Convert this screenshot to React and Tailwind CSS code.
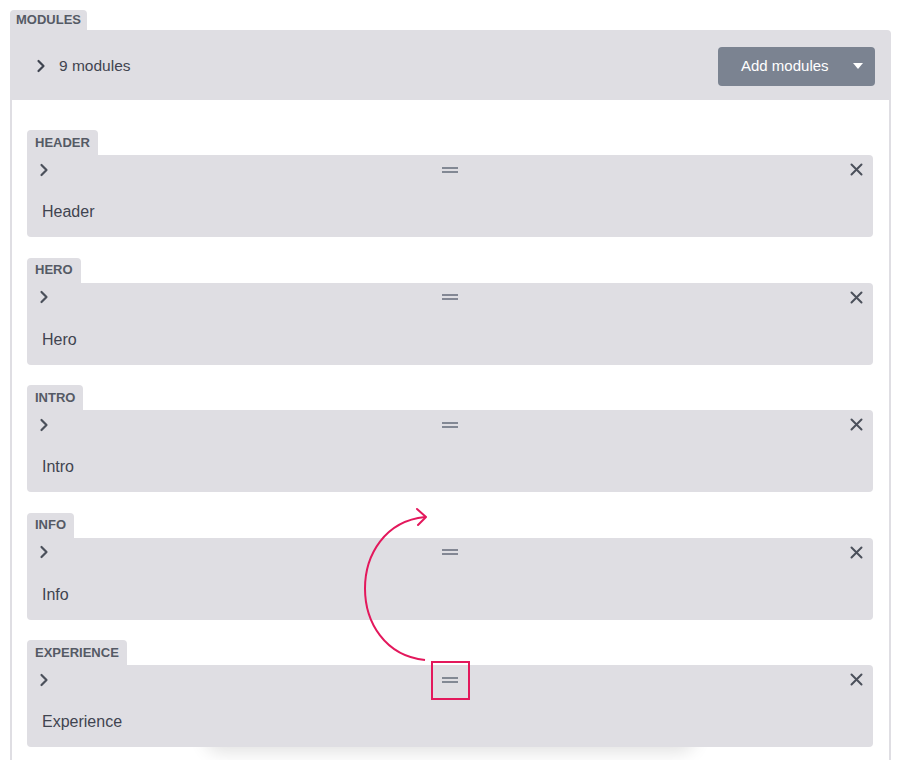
import React from "react";

const modules = ["Header", "Hero", "Intro", "Info", "Experience"];

const Chevron = ({ className = "" }) => (
  <svg width="10" height="14" viewBox="0 0 10 14" className={className}>
    <path d="M2.5 2 L7.5 7 L2.5 12" fill="none" stroke="currentColor" strokeWidth="2.2" strokeLinecap="round" strokeLinejoin="round" />
  </svg>
);

const DragHandle = () => (
  <svg width="16" height="6" viewBox="0 0 16 6">
    <line x1="0" y1="1" x2="16" y2="1" stroke="#6b7280" strokeWidth="1.6" />
    <line x1="0" y1="5" x2="16" y2="5" stroke="#6b7280" strokeWidth="1.6" />
  </svg>
);

const Close = () => (
  <svg width="13" height="13" viewBox="0 0 13 13">
    <path d="M1.5 1.5 L11.5 11.5 M11.5 1.5 L1.5 11.5" stroke="#4b505b" strokeWidth="2" strokeLinecap="round" />
  </svg>
);

const ModuleItem = ({ name }) => (
  <div>
    <div className="flex h-[25px] w-fit items-center rounded-t-[4px] bg-[#dfdee3] px-2 text-[13px] font-bold uppercase text-[#555a65]">
      {name}
    </div>
    <div className="h-[82px] rounded-b-[4px] rounded-tr-[4px] bg-[#dfdee3]">
      <div className="flex h-[28px] items-center justify-between pl-[12px] pr-[10px] pt-[1px]">
        <Chevron className="text-[#4b505b]" />
        <DragHandle />
        <Close />
      </div>
      <div className="pl-[15px] pt-[17px] text-[16px] text-[#3f4450]">{name}</div>
    </div>
  </div>
);

export default function App() {
  return (
    <div className="relative min-h-[760px] overflow-hidden bg-white pl-[10px] pt-[10px] font-['Liberation_Sans',Arial,sans-serif]">
      <div className="pointer-events-none absolute left-[205px] top-[710px] h-[32px] w-[490px] rounded-[24px] bg-[#dfdee3] shadow-[0_10px_18px_rgba(0,0,0,0.12)]" />

      <div className="relative w-[881px]">
        <div className="flex h-[20px] w-fit items-center rounded-t-[4px] bg-[#dfdee3] px-[6px] text-[13px] font-bold uppercase text-[#555a65]">
          Modules
        </div>
        <div className="flex h-[70px] items-center justify-between rounded-tr-[4px] bg-[#dfdee3] pl-[26px] pr-[16px] pt-[2px]">
          <div className="flex items-center gap-[13px] text-[15.5px] text-[#3f4450]">
            <Chevron className="text-[#3f4450]" />
            <span>9 modules</span>
          </div>
          <button className="flex h-[39px] w-[157px] items-center justify-between rounded-[4px] bg-[#7b8391] pl-[23px] pr-[12px] text-[15px] text-white">
            <span>Add modules</span>
            <svg width="10" height="6" viewBox="0 0 10 6">
              <path d="M0 0 L10 0 L5 6 Z" fill="white" />
            </svg>
          </button>
        </div>
        <div className="flex flex-col gap-[20.5px] border-x-2 border-[#dfdee3] pb-10 pl-[15px] pr-[16px] pt-[30px]">
          {modules.map((m) => (
            <ModuleItem key={m} name={m} />
          ))}
        </div>
      </div>

      <svg className="pointer-events-none absolute left-0 top-0" width="900" height="760">
        <path d="M425 660 C 345 652, 345 525, 425 517" fill="none" stroke="#e3185c" strokeWidth="2" />
        <path d="M417 509 L426 517 L418 525" fill="none" stroke="#e3185c" strokeWidth="2" strokeLinecap="round" strokeLinejoin="round" />
        <rect x="432" y="662" width="37" height="37" fill="none" stroke="#e3185c" strokeWidth="2" />
      </svg>
    </div>
  );
}
